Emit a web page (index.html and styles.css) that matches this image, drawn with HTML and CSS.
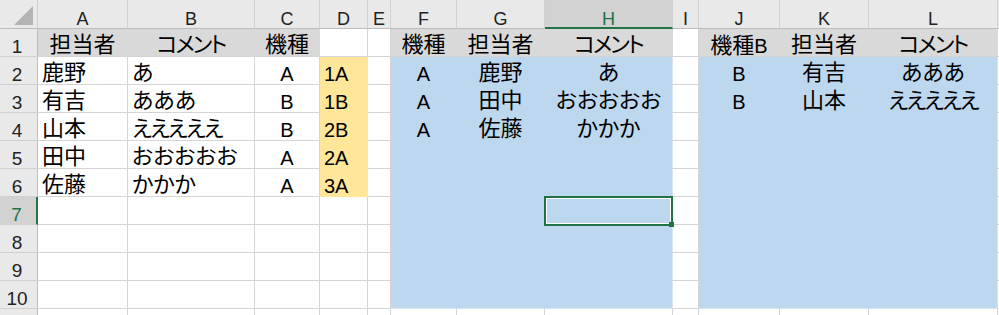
FILE: index.html
```html
<!DOCTYPE html>
<html lang="ja">
<head>
<meta charset="utf-8">
<link rel="stylesheet" href="styles.css">
</head>
<body>
<div class="sheet">
  <!-- column header row -->
  <div class="corner"><svg class="tri" width="19" height="19" viewBox="0 0 19 19"><polygon points="19,0 19,19 0,19" fill="#b4b4b4"/></svg></div>
  <div class="hdr">A</div><div class="hdr">B</div><div class="hdr">C</div><div class="hdr">D</div><div class="hdr">E</div><div class="hdr">F</div><div class="hdr">G</div><div class="hdr hdr-sel">H</div><div class="hdr">I</div><div class="hdr">J</div><div class="hdr">K</div><div class="hdr">L</div><div class="hdr"></div>

  <!-- row 1 -->
  <div class="rh">1</div>
  <div class="c g ctr j">担当者</div><div class="c g ctr j kata">コメント</div><div class="c g ctr j">機種</div><div class="c"></div><div class="c"></div>
  <div class="c g ctr j">機種</div><div class="c g ctr j">担当者</div><div class="c g ctr gl j kata">コメント</div><div class="c"></div>
  <div class="c g ctr"><span class="j">機種</span>B</div><div class="c g ctr j">担当者</div><div class="c g ctr gl j kata">コメント</div><div class="c"></div>

  <!-- row 2 -->
  <div class="rh">2</div>
  <div class="c j">鹿野</div><div class="c j">あ</div><div class="c ctr">A</div><div class="c y">1A</div><div class="c"></div>
  <div class="c b ctr">A</div><div class="c b ctr j">鹿野</div><div class="c b ctr bl j">あ</div><div class="c"></div>
  <div class="c b ctr">B</div><div class="c b ctr j">有吉</div><div class="c b ctr bl j">あああ</div><div class="c"></div>

  <!-- row 3 -->
  <div class="rh">3</div>
  <div class="c j">有吉</div><div class="c j">あああ</div><div class="c ctr">B</div><div class="c y">1B</div><div class="c"></div>
  <div class="c b ctr">A</div><div class="c b ctr j">田中</div><div class="c b ctr bl j">おおおおお</div><div class="c"></div>
  <div class="c b ctr">B</div><div class="c b ctr j">山本</div><div class="c b ctr bl j narrow">えええええ</div><div class="c"></div>

  <!-- row 4 -->
  <div class="rh">4</div>
  <div class="c j">山本</div><div class="c j narrow">えええええ</div><div class="c ctr">B</div><div class="c y">2B</div><div class="c"></div>
  <div class="c b ctr">A</div><div class="c b ctr j">佐藤</div><div class="c b ctr bl j">かかか</div><div class="c"></div>
  <div class="c b"></div><div class="c b"></div><div class="c b bl"></div><div class="c"></div>

  <!-- row 5 -->
  <div class="rh">5</div>
  <div class="c j">田中</div><div class="c j">おおおおお</div><div class="c ctr">A</div><div class="c y">2A</div><div class="c"></div>
  <div class="c b"></div><div class="c b"></div><div class="c b bl"></div><div class="c"></div>
  <div class="c b"></div><div class="c b"></div><div class="c b bl"></div><div class="c"></div>

  <!-- row 6 -->
  <div class="rh">6</div>
  <div class="c j">佐藤</div><div class="c j">かかか</div><div class="c ctr">A</div><div class="c y">3A</div><div class="c"></div>
  <div class="c b"></div><div class="c b"></div><div class="c b bl"></div><div class="c"></div>
  <div class="c b"></div><div class="c b"></div><div class="c b bl"></div><div class="c"></div>

  <!-- row 7 -->
  <div class="rh rh-sel">7</div>
  <div class="c"></div><div class="c"></div><div class="c"></div><div class="c"></div><div class="c"></div>
  <div class="c b"></div><div class="c b"></div><div class="c b bl sel"><span class="sel-box"></span><span class="sel-handle"></span></div><div class="c"></div>
  <div class="c b"></div><div class="c b"></div><div class="c b bl"></div><div class="c"></div>

  <!-- row 8 -->
  <div class="rh">8</div>
  <div class="c"></div><div class="c"></div><div class="c"></div><div class="c"></div><div class="c"></div>
  <div class="c b"></div><div class="c b"></div><div class="c b bl"></div><div class="c"></div>
  <div class="c b"></div><div class="c b"></div><div class="c b bl"></div><div class="c"></div>

  <!-- row 9 -->
  <div class="rh">9</div>
  <div class="c"></div><div class="c"></div><div class="c"></div><div class="c"></div><div class="c"></div>
  <div class="c b"></div><div class="c b"></div><div class="c b bl"></div><div class="c"></div>
  <div class="c b"></div><div class="c b"></div><div class="c b bl"></div><div class="c"></div>

  <!-- row 10 -->
  <div class="rh">10</div>
  <div class="c"></div><div class="c"></div><div class="c"></div><div class="c"></div><div class="c"></div>
  <div class="c b bb"></div><div class="c b bb"></div><div class="c b bl bb"></div><div class="c"></div>
  <div class="c b bb"></div><div class="c b bb"></div><div class="c b bl bb"></div><div class="c"></div>

  <!-- row 11 (partial, below the visible frame) -->
  <div class="rh"></div>
  <div class="c"></div><div class="c"></div><div class="c"></div><div class="c"></div><div class="c"></div>
  <div class="c"></div><div class="c"></div><div class="c"></div><div class="c"></div>
  <div class="c"></div><div class="c"></div><div class="c"></div><div class="c"></div>
</div>
</body>
</html>
```

FILE: styles.css
```css
html, body {
  margin: 0;
  padding: 0;
  background: #ffffff;
  overflow: hidden;
}

.sheet {
  display: grid;
  grid-template-columns: 38px 90px 127px 65px 48px 23px 66px 88px 128px 26px 81px 89px 129px 20px;
  grid-template-rows: 29px repeat(11, 28px);
  width: 999px;
  font-family: "Liberation Sans", "Noto Sans CJK JP", sans-serif;
  color: #000000;
}

.corner {
  background: #e9e9e9;
  border-right: 1px solid #d0d0d0;
  border-bottom: 1px solid #bdbdbd;
  box-sizing: border-box;
  display: flex;
  justify-content: flex-end;
  align-items: flex-end;
  padding: 0 4px 3px 0;
}

.tri {
  display: block;
}

.hdr {
  background: #e9e9e9;
  border-right: 1px solid #d0d0d0;
  border-bottom: 1px solid #bdbdbd;
  box-sizing: border-box;
  font-size: 18px;
  line-height: 18px;
  padding-top: 10px;
  text-align: center;
  color: #222222;
  overflow: hidden;
}

.hdr-sel {
  background: #d2d2d2;
  color: #217346;
  border-bottom: 2px solid #217346;
}

.rh {
  background: #e9e9e9;
  border-right: 1px solid #bdbdbd;
  border-bottom: 1px solid #d0d0d0;
  box-sizing: border-box;
  font-size: 19px;
  line-height: 19px;
  padding-top: 8px;
  padding-right: 3px;
  text-align: center;
  color: #222222;
}

.rh-sel {
  background: #d2d2d2;
  color: #217346;
  border-right: 2px solid #217346;
}

.c {
  border-right: 1px solid #d4d4d4;
  border-bottom: 1px solid #d4d4d4;
  box-sizing: border-box;
  font-size: 20px;
  line-height: 20px;
  padding: 7px 4px 0 4px;
  white-space: nowrap;
  overflow: visible;
}

.j {
  font-family: "Liberation Sans", "Noto Sans CJK JP", sans-serif;
  font-size: 22px;
  line-height: 20px;
  font-feature-settings: "palt";
}

.c.j {
  padding-top: 6px;
}

.kata {
  letter-spacing: -2px;
}

.narrow {
  letter-spacing: -2px;
}

.ctr {
  text-align: center;
}

.g {
  background: #d9d9d9;
  border-right-color: #d9d9d9;
}

.gl {
  border-right-color: #d9d9d9;
}

.b {
  background: #bdd7ee;
  border-right-color: #bdd7ee;
  border-bottom-color: #bdd7ee;
}

.bl {
  border-right-color: #d9e4ef;
}

.bb {
  border-bottom-color: #d9e4ef;
}

.y {
  background: #ffe699;
  border-right-color: #ffe699;
  border-bottom-color: #ffe699;
}

.sel {
  position: relative;
}

.sel-box {
  position: absolute;
  left: -1px;
  top: -1px;
  right: -1px;
  bottom: -2px;
  border: 2px solid #217346;
  box-shadow: inset 0 0 0 1px #ffffff;
}

.sel-handle {
  position: absolute;
  right: -2px;
  bottom: -3px;
  width: 5px;
  height: 5px;
  background: #217346;
}
```
